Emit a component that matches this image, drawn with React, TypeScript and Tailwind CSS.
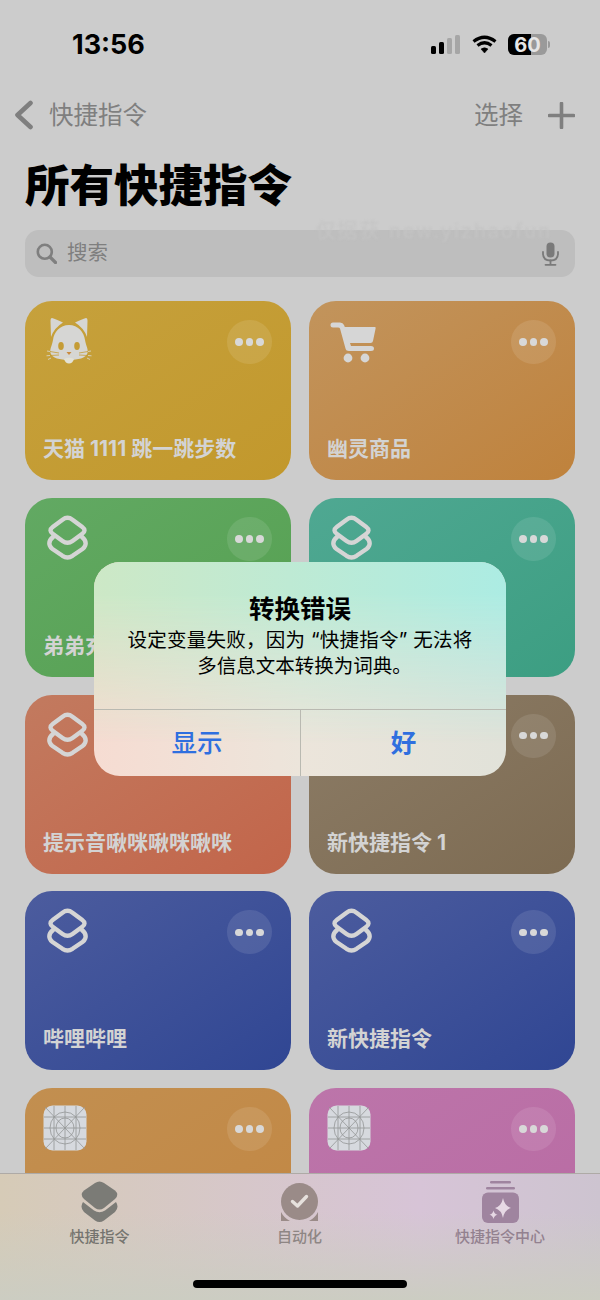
import React from "react";

const Layers = () => (
  <svg width="41" height="45" viewBox="0 0 41 45" fill="none" stroke="#d5d5d5" strokeWidth="4.4" strokeLinejoin="round" strokeLinecap="round">
    <path d="M15.5 4.7 Q20.5 1 25.5 4.7 L35 11.7 Q40 15.4 35 19 L25.5 26 Q20.5 29.7 15.5 26 L6 19 Q1 15.4 6 11.7 Z" />
    <path d="M6.5 21.5 Q1 26 2.8 30.5 Q3.5 32.5 5.5 34 L15.5 40.8 Q20.5 44 25.5 40.8 L35.5 34 Q37.5 32.5 38.2 30.5 Q40 26 34.5 21.5" />
  </svg>
);

const Cat = () => (
  <svg width="47" height="49" viewBox="0 0 47 49">
    <path d="M6 2 Q4.5 2 4.5 5 L5 21 Q8 12 17 6.5 Q10 3 6 2Z" fill="#d6d6d4" />
    <path d="M40 2 Q41.5 2 41.5 5 L41 21 Q38 12 29 6.5 Q36 3 40 2Z" fill="#d6d6d4" />
    <path d="M23 9 C14 9 8 16 7 24 C6 30 3.5 33 4.5 37 C6 42 14 44 23 44 C32 44 40 42 41.5 37 C42.5 33 40 30 39 24 C38 16 32 9 23 9Z" fill="#d6d6d4" />
    <ellipse cx="15" cy="30" rx="2.8" ry="4" fill="#c59c35" />
    <ellipse cx="31" cy="30" rx="2.8" ry="4" fill="#c59c35" />
    <path d="M20.5 36 H25.5 L23 39Z" fill="#c98a3f" />
    <path d="M18 43 Q23 40.5 28 43 Q26.5 47.5 23 47.5 Q19.5 47.5 18 43Z" fill="#e2e1d6" />
    <g stroke="#c59c35" strokeWidth="0.8" fill="none">
      <path d="M13 37 L4 35.5" />
      <path d="M13 39 L4 39.5" />
      <path d="M33 37 L42 35.5" />
      <path d="M33 39 L42 39.5" />
    </g>
    <g stroke="#d8d4c2" strokeWidth="0.9" fill="none">
      <path d="M4 35.5 L1 35" />
      <path d="M4 39.5 L0.5 39.8" />
      <path d="M5 42 L2 43.5" />
      <path d="M42 35.5 L45 35" />
      <path d="M42 39.5 L45.5 39.8" />
      <path d="M41 42 L44 43.5" />
    </g>
  </svg>
);

const Cart = () => (
  <svg width="46" height="42" viewBox="0 0 46 42" fill="#d6d6d6">
    <path d="M3 0.5 H10 Q13 0.5 14 3 L14.8 5 H45 Q46 5 45.6 6.5 L43 19 Q42.6 21 40.5 21 H20 L21 24 H41 Q44 24 44 26.5 Q44 29 41 29 H19 Q16 29 15.5 26.5 L10 6.5 Q9.5 5.5 8 5.5 H3 Q0.5 5.5 0.5 3 Q0.5 0.5 3 0.5Z" />
    <circle cx="18" cy="36" r="4.4" />
    <circle cx="35" cy="36" r="4.4" />
  </svg>
);

const TemplateIcon = () => (
  <svg width="44" height="46" viewBox="0 0 44 46" fill="none">
    <rect x="0.5" y="0.5" width="43" height="45" rx="9" fill="#d6d9de" />
    <g stroke="#939596" strokeWidth="0.8">
      <path d="M1 12 H43 M1 23 H43 M1 34 H43" />
      <path d="M11 1 V45 M22 1 V45 M33 1 V45" />
      <path d="M2 2 L42 44 M42 2 L2 44" />
      <ellipse cx="22" cy="23" rx="15" ry="16" />
      <ellipse cx="22" cy="23" rx="9" ry="10" />
    </g>
  </svg>
);

const MoreButton = () => (
  <div className="flex h-[44px] w-[45px] items-center justify-center gap-[3px] rounded-full bg-white/10">
    <span className="h-[7.5px] w-[7.5px] rounded-full bg-[#d8d8d8]" />
    <span className="h-[7.5px] w-[7.5px] rounded-full bg-[#d8d8d8]" />
    <span className="h-[7.5px] w-[7.5px] rounded-full bg-[#d8d8d8]" />
  </div>
);

const cards = [
  { title: "天猫 1111 跳一跳步数", color: "from-[#c6a13c] to-[#c2982c]", icon: <Cat />, iconClass: "ml-[-1px] mt-[-4px]" },
  { title: "幽灵商品", color: "from-[#c2945c] to-[#bf823c]", icon: <Cart />, iconClass: "ml-[-1px] mt-[2px]" },
  { title: "弟弟充值", color: "from-[#62a963] to-[#55a050]", icon: <Layers />, iconClass: "mt-[-2px]" },
  { title: "", color: "from-[#4fa892] to-[#3c9e82]", icon: <Layers />, iconClass: "mt-[-2px]" },
  { title: "提示音啾咪啾咪啾咪", color: "from-[#c27a5f] to-[#c2654a]", icon: <Layers />, iconClass: "mt-[-2px]" },
  { title: "新快捷指令 1", color: "from-[#8c7c66] to-[#7d6b52]", icon: <Layers />, iconClass: "mt-[-2px]" },
  { title: "哔哩哔哩", color: "from-[#4c5c9e] to-[#304693]", icon: <Layers />, iconClass: "mt-[-2px]" },
  { title: "新快捷指令", color: "from-[#4c5c9e] to-[#304693]", icon: <Layers />, iconClass: "mt-[-2px]" },
  { title: "", color: "from-[#c28f50] to-[#c28743]", icon: <TemplateIcon />, iconClass: "ml-[-4px] mt-[-2px]" },
  { title: "", color: "from-[#bc75aa] to-[#b96ba3]", icon: <TemplateIcon />, iconClass: "ml-[-4px] mt-[-2px]" },
];

const StatusBar = () => (
  <div className="flex h-[88px] items-center justify-between pl-[72px] pr-[50px] pt-[1px]">
    <span className="text-[27px] font-bold leading-none text-black [font-family:Inter,sans-serif]">13:56</span>
    <div className="flex items-center">
      <div className="flex h-[19px] items-end gap-[3px]">
        <span className="h-[8px] w-[5px] rounded-[1.5px] bg-black" />
        <span className="h-[12px] w-[5px] rounded-[1.5px] bg-black" />
        <span className="h-[16px] w-[5px] rounded-[1.5px] bg-[#a6a6a6]" />
        <span className="h-[19px] w-[5px] rounded-[1.5px] bg-[#a6a6a6]" />
      </div>
      <svg className="ml-[12px]" width="25" height="19" viewBox="0 0 25 19" fill="none" stroke="#000" strokeWidth="3.2">
        <path d="M1.5 6.5 Q12.5 -2 23.5 6.5" />
        <path d="M5.5 10.5 Q12.5 5 19.5 10.5" />
        <path d="M9 14 L12.5 18 L16 14 Q12.5 11.5 9 14Z" fill="#000" strokeWidth="0.5" />
      </svg>
      <div className="relative ml-[11px] flex h-[21px] w-[39px] items-center justify-center overflow-hidden rounded-[6px] bg-[#9a9a9a]">
        <span className="absolute inset-y-0 left-0 w-[23px] bg-black" />
        <span className="relative text-[20px] font-bold leading-none text-[#e6e6e6] [font-family:Inter,sans-serif]">60</span>
      </div>
      <span className="ml-[1px] h-[7px] w-[2px] rounded-r-full bg-[#9a9a9a]" />
    </div>
  </div>
);

const NavBar = () => (
  <div className="flex h-[54px] items-center justify-between pl-[14px] pr-[25px] text-[24.5px] leading-none text-[#7f7f7f]">
    <div className="flex items-center gap-[15px]">
      <svg width="20" height="30" viewBox="0 0 20 30" fill="none" stroke="#7f7f7f" strokeWidth="4.6" strokeLinecap="round" strokeLinejoin="round">
        <path d="M16.5 3 L3.5 15 L16.5 27" />
      </svg>
      <span>快捷指令</span>
    </div>
    <div className="flex items-center gap-[25px]">
      <span>选择</span>
      <svg width="27" height="27" viewBox="0 0 27 27" fill="none" stroke="#7f7f7f" strokeWidth="3.6" strokeLinecap="round">
        <path d="M13.5 1.5 V25.5 M1.5 13.5 H25.5" />
      </svg>
    </div>
  </div>
);

const SearchBar = () => (
  <div className="relative mx-[25px] mt-[13px] flex h-[47px] items-center justify-between rounded-[14px] bg-[#bebebe] pl-[11px] pr-[16px]">
    <span className="absolute right-[23px] top-[-9px] text-[20px] leading-none tracking-[2px] text-[#c4c4c4] blur-[1px]">仅据获 new.yizhaofun</span>
    <div className="flex items-center gap-[10px] text-[20.5px] leading-none text-[#7f7f7f]">
      <svg width="21" height="21" viewBox="0 0 21 21" fill="none" stroke="#7f7f7f" strokeWidth="2.6" strokeLinecap="round">
        <circle cx="8.8" cy="8.8" r="7" />
        <path d="M14 14 L19.5 19.5" strokeWidth="3.2" />
      </svg>
      <span>搜索</span>
    </div>
    <svg width="17" height="24" viewBox="0 0 17 24" fill="none" stroke="#7a7a7a" strokeWidth="1.8" strokeLinecap="round">
      <rect x="4.5" y="0.5" width="8" height="15" rx="4" fill="#7a7a7a" stroke="none" />
      <path d="M1 10 V11.5 Q1 18.5 8.5 18.5 Q16 18.5 16 11.5 V10" />
      <path d="M8.5 18.5 V22.5 M3.5 22.8 H13.5" />
    </svg>
  </div>
);

const Dialog = () => (
  <div className="absolute left-[94px] top-[562px] w-[412px] overflow-hidden rounded-[26px] bg-linear-to-r from-[#f6dcd2] via-[#ece5db] to-[#e1e2d9]">
    <div className="absolute inset-0 bg-linear-to-r from-[#cde8c6] to-[#acece3] [mask-image:linear-gradient(to_bottom,black_15%,transparent_85%)]" />
    <div className="relative flex h-[147px] flex-col items-center text-black">
      <span className="mt-[32px] text-[25.5px] font-bold leading-[30px]">转换错误</span>
      <p className="mt-[4px] text-center text-[19.5px] leading-[25.5px]">
        <span className="tracking-[0.25px]">设定变量失败，因为 “快捷指令” 无法将</span>
        <br />
        <span className="ml-[9px]">多信息文本转换为词典。</span>
      </p>
    </div>
    <div className="relative flex h-[67px] border-t border-[#b9b9b1] text-[25.5px] leading-none text-[#2f6fdf]">
      <div className="flex w-[207px] items-center justify-center border-r border-[#b9b9b1] font-medium">显示</div>
      <div className="flex flex-1 items-center justify-center font-bold">好</div>
    </div>
  </div>
);

const TabBar = () => (
  <div className="absolute inset-x-0 top-[1173px] h-[127px] border-t border-[#aeaaa6] bg-linear-to-r from-[#d6cbb7] via-[#d7c4d7] via-70% to-[#cdc4d0]">
    <div className="absolute inset-0 bg-linear-to-b from-transparent from-30% to-[#cccdc2]" />
    <div className="relative flex text-[15px] font-medium leading-none">
      <div className="absolute left-0 top-[7px] flex w-[199px] flex-col items-center text-[#75746f]">
        <svg width="37" height="42" viewBox="0 0 37 42" fill="#7b7b76">
          <path d="M14 2 Q18.5 -1 23 2 L34 9.5 Q38.5 13.5 34 18 L23 27 Q18.5 30 14 27 L3 18 Q-1.5 13.5 3 9.5 Z" />
          <path d="M2 21 Q-1.5 26.5 3 31 L14 39.5 Q18.5 42.5 23 39.5 L34 31 Q38.5 26.5 35 21 L24 29.5 Q18.5 33 13 29.5 Z" />
        </svg>
        <span className="mt-[6px]">快捷指令</span>
      </div>
      <div className="absolute left-[200px] top-[9px] flex w-[199px] flex-col items-center text-[#8e8684]">
        <svg width="37" height="40" viewBox="0 0 37 40">
          <path d="M0 29 V38 H9 Q3 35 0 29Z M37 29 V38 H28 Q34 35 37 29Z" fill="#9a8b88" />
          <circle cx="18.5" cy="18.5" r="18.5" fill="#9a8b88" />
          <path d="M11.5 18.5 L16.5 23 L25.5 13.5" fill="none" stroke="#e6e1dd" strokeWidth="3.4" strokeLinecap="round" strokeLinejoin="round" />
        </svg>
        <span className="mt-[6px]">自动化</span>
      </div>
      <div className="absolute left-[400px] top-[7px] flex w-[200px] flex-col items-center text-[#93818f]">
        <svg width="37" height="42" viewBox="0 0 37 42">
          <rect x="8" y="0" width="21" height="2.4" rx="1.2" fill="#9f849f" />
          <rect x="4" y="6" width="29" height="2.4" rx="1.2" fill="#9f849f" />
          <rect x="0" y="11.5" width="37" height="30.5" rx="6" fill="#9f849f" />
          <path d="M21 17 Q22.5 25 29 27 Q22.5 29 21 37 Q19.5 29 13 27 Q19.5 25 21 17Z" fill="#e6d8e4" />
          <path d="M11.5 29.5 Q12.2 33 15.5 33.8 Q12.2 34.6 11.5 38 Q10.8 34.6 7.5 33.8 Q10.8 33 11.5 29.5Z" fill="#e6d8e4" />
        </svg>
        <span className="mt-[6px]">快捷指令中心</span>
      </div>
    </div>
    <div className="absolute left-[193px] top-[106px] h-[8px] w-[214px] rounded-full bg-black" />
  </div>
);

export default function App() {
  return (
    <div className="relative h-[1300px] w-[600px] overflow-hidden bg-[#cccccc] [font-family:Inter,'Noto_Sans_CJK_SC',sans-serif]">
      <StatusBar />
      <NavBar />
      <h1 className="ml-[25px] mt-[13px] text-[44.5px] font-black leading-[62px] text-black">所有快捷指令</h1>
      <SearchBar />
      <div className="mx-[25px] mt-[24px] grid grid-cols-2 gap-x-[18px] gap-y-[17.75px]">
        {cards.map((card, i) => (
          <div key={i} className={`flex h-[179px] flex-col justify-between rounded-[27px] bg-linear-to-br ${card.color} pb-[19px] pl-[18px] pr-[19px] pt-[19px]`}>
            <div className="flex items-start justify-between">
              <div className={`${card.iconClass} h-[49px] pl-[4px]`}>{card.icon}</div>
              <MoreButton />
            </div>
            <span className="text-[21px] font-bold leading-[24px] text-[#d3d3d3]">{card.title}</span>
          </div>
        ))}
      </div>
      <Dialog />
      <TabBar />
    </div>
  );
}
